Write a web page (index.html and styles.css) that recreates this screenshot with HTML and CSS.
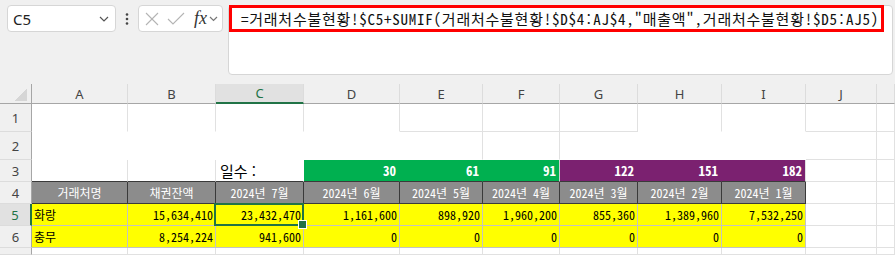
FILE: index.html
```html
<!DOCTYPE html>
<html lang="ko">
<head>
  <meta charset="UTF-8">
  <title>거래처수불현황</title>
  <link rel="stylesheet" href="styles.css">
</head>
<body>

<div class="top">
  <div class="namebox">
    <span>C5</span>
    <svg class="chev" width="10" height="6" viewBox="0 0 10 6"><polyline points="1,1 5,5 9,1" /></svg>
  </div>
  <div class="dots">
    <svg width="4" height="12" viewBox="0 0 4 12"><circle cx="2" cy="1.5" r="1.3"/><circle cx="2" cy="6" r="1.3"/><circle cx="2" cy="10.5" r="1.3"/></svg>
  </div>
  <div class="fxbox">
    <svg width="14" height="14" viewBox="0 0 14 14" class="ico"><line x1="1" y1="1" x2="13" y2="13"/><line x1="13" y1="1" x2="1" y2="13"/></svg>
    <svg width="18" height="14" viewBox="0 0 18 14" class="ico"><polyline points="1,7 6,12 17,1"/></svg>
    <i class="fx">fx</i>
    <svg class="chev small" width="9" height="6" viewBox="0 0 9 6"><polyline points="1,1 4.5,4.5 8,1" /></svg>
  </div>
  <div class="formula">
    <div class="ftext">=거래처수불현황!$C5+SUMIF(거래처수불현황!$D$4:AJ$4,"매출액",거래처수불현황!$D5:AJ5)</div>
  </div>
</div>

<div class="sheet">
  <!-- header -->
  <div class="c corner"></div>
  <div class="c ch">A</div>
  <div class="c ch">B</div>
  <div class="c ch sel">C</div>
  <div class="c ch">D</div>
  <div class="c ch">E</div>
  <div class="c ch">F</div>
  <div class="c ch">G</div>
  <div class="c ch">H</div>
  <div class="c ch">I</div>
  <div class="c ch">J</div>
  <div class="c ch"></div>

  <!-- row 1 -->
  <div class="c rh">1</div>
  <div class="c nb"></div>
  <div class="c nb"></div>
  <div class="c nb"></div>
  <div class="c nb"></div>
  <div class="c"></div>
  <div class="c"></div>
  <div class="c"></div>
  <div class="c nb"></div>
  <div class="c nb"></div>
  <div class="c"></div>
  <div class="c"></div>

  <!-- row 2 -->
  <div class="c rh">2</div>
  <div class="c nr nb"></div>
  <div class="c nr nb"></div>
  <div class="c nr nb"></div>
  <div class="c nr nb"></div>
  <div class="c nb"></div>
  <div class="c nb"></div>
  <div class="c nr nb"></div>
  <div class="c nr nb"></div>
  <div class="c nr nb"></div>
  <div class="c"></div>
  <div class="c"></div>

  <!-- row 3 -->
  <div class="c rh">3</div>
  <div class="c dk"></div>
  <div class="c dk"></div>
  <div class="c dk nr label">일수 :</div>
  <div class="c dk nr days green">30</div>
  <div class="c dk nr days green">61</div>
  <div class="c dk days green split">91</div>
  <div class="c dk nr days purple">122</div>
  <div class="c dk nr days purple">151</div>
  <div class="c dk days purple">182</div>
  <div class="c"></div>
  <div class="c"></div>

  <!-- row 4 -->
  <div class="c rh">4</div>
  <div class="c hd">거래처명</div>
  <div class="c hd">채권잔액</div>
  <div class="c hd">2024년 7월</div>
  <div class="c hd">2024년 6월</div>
  <div class="c hd">2024년 5월</div>
  <div class="c hd">2024년 4월</div>
  <div class="c hd">2024년 3월</div>
  <div class="c hd">2024년 2월</div>
  <div class="c hd">2024년 1월</div>
  <div class="c"></div>
  <div class="c"></div>

  <!-- row 5 -->
  <div class="c rh sel">5</div>
  <div class="c y">화랑</div>
  <div class="c y num">15,634,410</div>
  <div class="c y num active">23,432,470</div>
  <div class="c y num">1,161,600</div>
  <div class="c y num">898,920</div>
  <div class="c y num">1,960,200</div>
  <div class="c y num">855,360</div>
  <div class="c y num">1,389,960</div>
  <div class="c y num">7,532,250</div>
  <div class="c"></div>
  <div class="c"></div>

  <!-- row 6 -->
  <div class="c rh">6</div>
  <div class="c y">충무</div>
  <div class="c y num">8,254,224</div>
  <div class="c y num">941,600</div>
  <div class="c y num">0</div>
  <div class="c y num">0</div>
  <div class="c y num">0</div>
  <div class="c y num">0</div>
  <div class="c y num">0</div>
  <div class="c y num">0</div>
  <div class="c"></div>
  <div class="c"></div>

  <!-- row 7 -->
  <div class="c rh"></div>
  <div class="c"></div>
  <div class="c"></div>
  <div class="c"></div>
  <div class="c"></div>
  <div class="c"></div>
  <div class="c"></div>
  <div class="c"></div>
  <div class="c"></div>
  <div class="c"></div>
  <div class="c"></div>
  <div class="c"></div>
</div>

</body>
</html>
```

FILE: styles.css
```css
* { box-sizing: border-box; }
body {
  margin: 0;
  background: #f0f0f0;
  font-family: "Noto Sans", "Noto Sans CJK KR", sans-serif;
  overflow: hidden;
}

/* formula bar */
.top {
  display: flex;
  align-items: flex-start;
  height: 84px;
  padding: 5px 2px 0 7px;
}
.namebox {
  width: 109px; height: 27px;
  background: #fff;
  border: 1px solid #d6d6d6;
  border-radius: 4px;
  display: flex;
  align-items: center;
  justify-content: space-between;
  padding: 0 6px 0 5px;
  font-size: 15px;
  color: #222;
}
.chev { fill: none; stroke: #555; stroke-width: 1.2; }
.chev.small { stroke: #777; }
.dots {
  width: 22px; height: 27px;
  display: flex; align-items: center; justify-content: center;
  fill: #444;
}
.fxbox {
  width: 85px; height: 27px;
  background: #fff;
  border: 1px solid #d6d6d6;
  border-radius: 4px;
  display: flex;
  align-items: center;
  padding: 0 2px 0 6px;
  gap: 8px;
}
.ico { fill: none; stroke: #b4b4b4; stroke-width: 1.1; }
.fx {
  font-family: "Liberation Serif", serif;
  font-size: 18px;
  color: #333;
  margin-left: 1px;
  margin-right: -6px;
}
.formula {
  flex: 1;
  height: 70px;
  margin-left: 5px;
  background: #fff;
  border: 1px solid #d6d6d6;
  border-radius: 4px;
}
.ftext {
  width: 655px; height: 27px;
  margin-top: -1px;
  border: 3px solid #ff0000;
  padding-left: 9px;
  display: flex;
  align-items: center;
  font-family: "Noto Sans Mono CJK KR", "Noto Sans CJK KR", monospace;
  font-size: 15px;
  letter-spacing: 0.75px;
  color: #111;
  white-space: nowrap;
}

/* sheet */
.sheet {
  display: grid;
  grid-template-columns: 32px 96px 88px 88px 96px 83px 77px 78px 84px 84px 71px 18px;
  grid-template-rows: 20px 28px 28px 22px 22px 22px 22px 7px;
  background: #fff;
}
.c {
  border-right: 1px solid #e1e1e1;
  border-bottom: 1px solid #e1e1e1;
  display: flex;
  align-items: center;
  padding: 0 2px;
  white-space: nowrap;
  font-family: "Noto Sans Mono CJK KR", "Noto Sans CJK KR", monospace;
  font-size: 12px;
  color: #000;
}
.nr { border-right-color: transparent; }
.nb { border-bottom-color: transparent; }

.corner {
  background: #f0f0f0 linear-gradient(135deg, transparent 50%, #d6d6d6 50%) no-repeat 14px 4px / 13px 13px;
  border-right-color: #a6a6a6;
  border-bottom-color: #a6a6a6;
}
.ch, .rh {
  background: #f0f0f0;
  justify-content: center;
  font-family: "Noto Sans", sans-serif;
  font-size: 13px;
  color: #444;
}
.ch {
  border-right-color: #dcdcdc;
  border-bottom-color: #a6a6a6;
}
.ch.sel {
  background: #e1e1e1;
  border-bottom: 2px solid #217346;
  color: #217346;
}
.rh {
  border-right-color: #a6a6a6;
  border-bottom-color: #dcdcdc;
}
.rh.sel {
  background: #e1e1e1;
  border-right: 2px solid #217346;
  color: #217346;
}

.dk { border-bottom-color: #3a3a3a; }
.label {
  font-family: "Noto Sans CJK KR", sans-serif;
  font-size: 15px;
  padding-left: 4px;
}
.days {
  justify-content: flex-end;
  color: #fff;
  font-size: 13px;
  font-weight: bold;
  padding-right: 3px;
}
.green { background: #00b050; }
.purple { background: #7b2170; }
.split { border-right-color: #d0d0d0; }

.hd {
  background: #8c8c8c;
  color: #fff;
  justify-content: center;
  border-right-color: #3a3a3a;
  border-bottom-color: #3a3a3a;
}
.y {
  background: #ffff00;
  border-right-color: #c3c3c3;
  border-bottom-color: #c3c3c3;
}
.num { justify-content: flex-end; }

.active { position: relative; z-index: 1; }
.active::after {
  content: "";
  position: absolute;
  left: -2px; top: -1px; right: -1px; bottom: -1px;
  border: 2px solid #217346;
}
.active::before {
  content: "";
  position: absolute;
  right: -4px; bottom: -4px;
  width: 7px; height: 7px;
  background: #217346;
  border: 1px solid #fff;
  z-index: 2;
}
```
